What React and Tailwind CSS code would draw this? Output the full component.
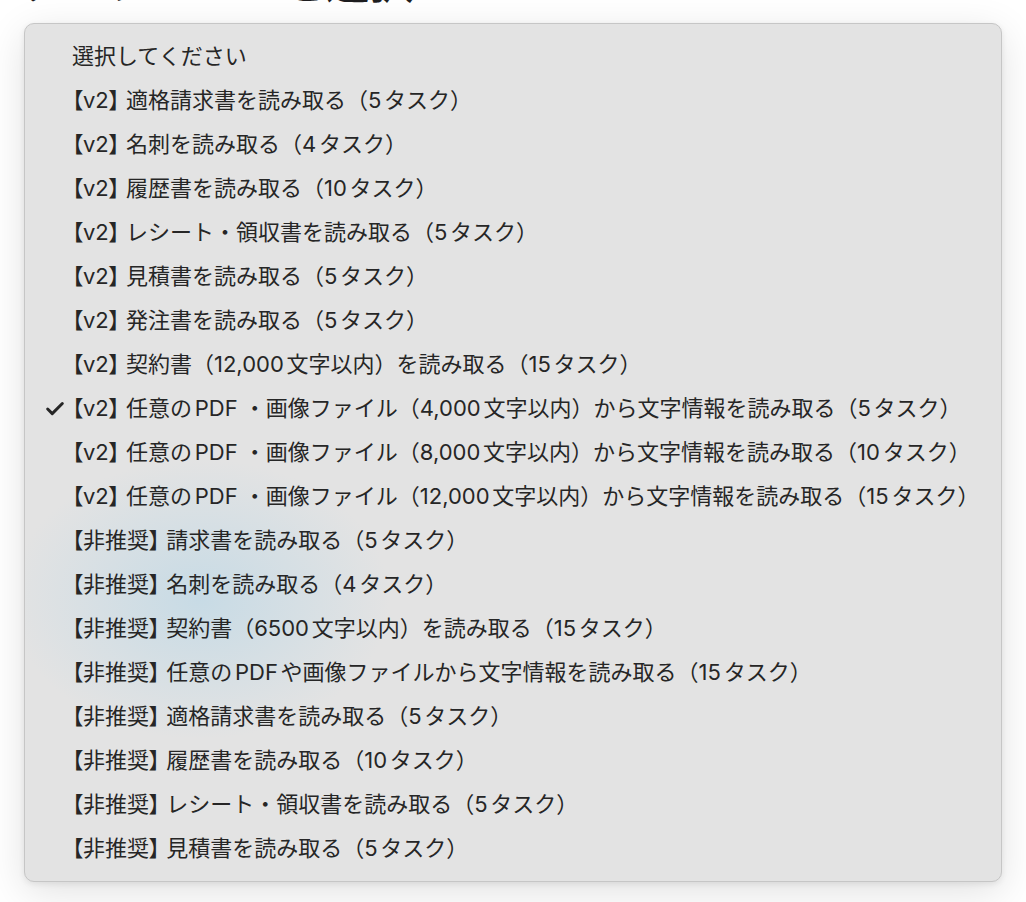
import { Check } from 'lucide-react';

const items = [
    '選択してください',
    '【v2】 適格請求書を読み取る（5タスク）',
    '【v2】 名刺を読み取る（4タスク）',
    '【v2】 履歴書を読み取る（10タスク）',
    '【v2】 レシート・領収書を読み取る（5タスク）',
    '【v2】 見積書を読み取る（5タスク）',
    '【v2】 発注書を読み取る（5タスク）',
    '【v2】 契約書（12,000文字以内）を読み取る（15タスク）',
    '【v2】 任意のPDF ・画像ファイル（4,000文字以内）から文字情報を読み取る（5タスク）',
    '【v2】 任意のPDF ・画像ファイル（8,000文字以内）から文字情報を読み取る（10タスク）',
    '【v2】 任意のPDF ・画像ファイル（12,000文字以内）から文字情報を読み取る（15タスク）',
    '【非推奨】 請求書を読み取る（5タスク）',
    '【非推奨】 名刺を読み取る（4タスク）',
    '【非推奨】 契約書（6500文字以内）を読み取る（15タスク）',
    '【非推奨】 任意のPDFや画像ファイルから文字情報を読み取る（15タスク）',
    '【非推奨】 適格請求書を読み取る（5タスク）',
    '【非推奨】 履歴書を読み取る（10タスク）',
    '【非推奨】 レシート・領収書を読み取る（5タスク）',
    '【非推奨】 見積書を読み取る（5タスク）',
];

const selected = 8;

// split "【v2】 rest" so only the bracketed tag is set proportional
function Label({ text }) {
    const end = text.indexOf('】');
    if (!text.startsWith('【') || end < 0) {
        return <span>{text}</span>;
    }
    return (
        <span>
            <span className="[font-feature-settings:'palt']">{text.slice(0, end + 1)}</span>
            {text.slice(end + 1)}
        </span>
    );
}

export default function App() {
    return (
        <div className="min-h-[902px] w-[1026px] overflow-hidden bg-white font-['Inter','Noto_Sans_CJK_JP',sans-serif]">
            {/* heading, mostly scrolled out of view */}
            <div className="-mt-[42px] ml-[19px] h-[44px] text-[44px] font-medium leading-[44px] text-[#1d1d1f] font-['Noto_Sans_CJK_JP',sans-serif]">
                テンプレートを選択
            </div>

            <div className="ml-[24px] mt-[21px] w-[978px] rounded-[10px] border border-[#c6c6c6] bg-[#e3e3e3] bg-[radial-gradient(ellipse_190px_140px_at_175px_575px,rgba(190,216,230,0.75),transparent)] pb-[11px] pt-[10px] shadow-[0_10px_40px_rgba(0,0,0,0.12),0_2px_6px_rgba(0,0,0,0.08)]">
                <ul>
                    {items.map((label, i) => (
                        <li
                            key={label}
                            className="relative flex h-[44px] items-center pl-[47px] text-[22px] text-[#262626] [text-autospace:normal]"
                        >
                            {i === selected && (
                                <Check
                                    size={22}
                                    strokeWidth={3.25}
                                    className="absolute left-[19px] top-[12px] text-[#262626]"
                                />
                            )}
                            <Label text={label} />
                        </li>
                    ))}
                </ul>
            </div>
        </div>
    );
}
